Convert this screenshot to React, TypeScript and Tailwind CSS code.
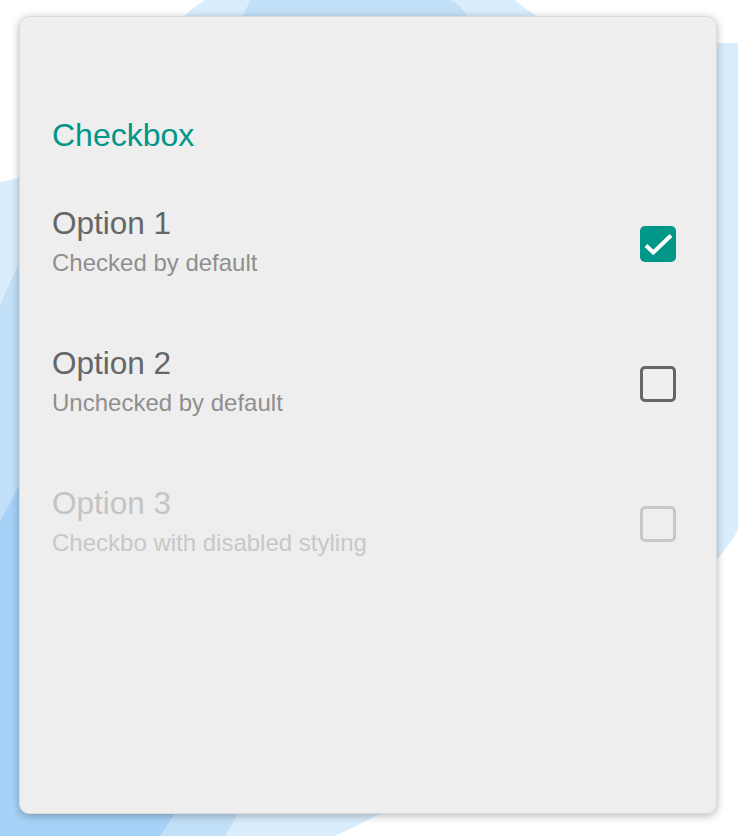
import React from "react";

type Option = {
	title: string;
	subtitle: string;
	checked: boolean;
	disabled?: boolean;
};

const options: Option[] = [
	{ title: "Option 1", subtitle: "Checked by default", checked: true },
	{ title: "Option 2", subtitle: "Unchecked by default", checked: false },
	{ title: "Option 3", subtitle: "Checkbo with disabled styling", checked: false, disabled: true },
];

const Backdrop = () => (
	<svg className="absolute inset-0" width="738" height="836" viewBox="0 0 738 836">
		<path
			d="M205,0 L515,0 C560,40 620,43 738,43 L738,530 C700,600 500,760 335,836 L0,836 L0,182 C80,172 140,40 205,0 Z"
			fill="#daedfc"
		/>
		<path
			d="M250,0 L450,0 C560,40 300,720 225,836 L0,836 L0,306 C60,150 220,80 250,0 Z"
			fill="#c2e0f8"
		/>
		<path d="M0,522 L25,474 C120,560 260,700 160,836 L0,836 Z" fill="#a6d2f7" />
	</svg>
);

const Box = ({ checked, disabled }: { checked: boolean; disabled?: boolean }) => {
	if (checked)
		return (
			<div className="w-[36px] h-[36px] rounded-[5px] bg-[#009688] flex items-center justify-center mt-[5px]">
				<svg width="36" height="36" viewBox="0 0 36 36">
					<path d="M6,19.5 L13.3,26.5 L31,9.5" fill="none" stroke="#fff" strokeWidth="4" />
				</svg>
			</div>
		);
	return (
		<div
			className={`w-[36px] h-[36px] rounded-[5px] border-[3px] mt-[5px] ${
				disabled ? "border-[#c8c8c8]" : "border-[#666666]"
			}`}
		/>
	);
};

export default function App() {
	return (
		<div className="relative w-[738px] h-[836px] overflow-hidden bg-white font-['Liberation_Sans',Arial,sans-serif]">
			<Backdrop />
			<div className="relative pt-[16px] pl-[19px]">
				<div className="w-[698px] h-[798px] bg-[#eeeeee] border border-[#dadada] rounded-[10px] shadow-[0_2px_9px_rgba(0,0,0,0.28)] pt-[98px] pl-[32px] pr-[40px]">
					<h2 className="text-[32px] leading-[40px] text-[#009688]">Checkbox</h2>
					<div className="mt-[50px] flex flex-col gap-[67px]">
						{options.map((o, i) => (
							<div key={i} className="flex items-center justify-between">
								<div>
									<p
										className={`text-[31.5px] leading-[36px] ${
											o.disabled ? "text-[#c4c4c4]" : "text-[#666666]"
										}`}
									>
										{o.title}
									</p>
									<p
										className={`text-[24px] leading-[30px] mt-[7px] ${
											o.disabled ? "text-[#c8c8c8]" : "text-[#8f8f8f]"
										}`}
									>
										{o.subtitle}
									</p>
								</div>
								<Box checked={o.checked} disabled={o.disabled} />
							</div>
						))}
					</div>
				</div>
			</div>
		</div>
	);
}
